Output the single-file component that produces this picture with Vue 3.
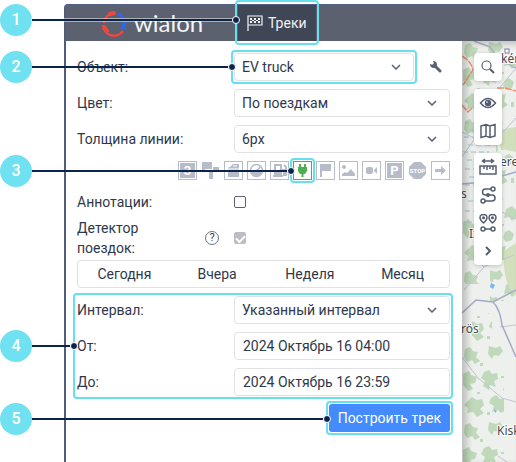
<script setup>
import { ref } from 'vue'

const unit = ref('EV truck')
const color = ref('По поездкам')
const thickness = ref('6px')
const interval = ref('Указанный интервал')
const from = ref('2024 Октябрь 16 04:00')
const to = ref('2024 Октябрь 16 23:59')
const annotations = ref(false)
const detector = ref(true)
const periods = ['Сегодня', 'Вчера', 'Неделя', 'Месяц']
const markers = [
  { id: 'clusters', label: 'Группировка' },
  { id: 'events', label: 'События' },
  { id: 'fillings', label: 'Заправки' },
  { id: 'speedings', label: 'Превышения скорости' },
  { id: 'thefts', label: 'Сливы' },
  { id: 'charges', label: 'Зарядки' },
  { id: 'flags', label: 'Маркеры событий' },
  { id: 'images', label: 'Изображения' },
  { id: 'video', label: 'Видео' },
  { id: 'parkings', label: 'Стоянки' },
  { id: 'stops', label: 'Остановки' },
  { id: 'arrows', label: 'Направление' }
]
</script>

<template>
  <div class="page">
    <div class="app">
      <header class="topbar">
        <a class="brand" href="#">
          <svg width="28" height="28" viewBox="0 0 28 28" fill="none">
            <path d="M4 14A11 11 0 0 1 14 4" stroke="#f4453c" stroke-width="2.4" />
            <path d="M10 5l4-1" stroke="#f4453c" stroke-width="4" stroke-linecap="round" />
            <path d="M3 16a11 11 0 0 0 20 6" stroke="#f4453c" stroke-width="2.4" />
            <path d="M4 18l3 4" stroke="#f4453c" stroke-width="4" stroke-linecap="round" />
            <path d="M17 4a11 11 0 0 1 7 9" stroke="#2f65f4" stroke-width="2.4" />
            <path d="M24 15l-1 4" stroke="#2f65f4" stroke-width="4" stroke-linecap="round" />
          </svg>
          <span>wialon</span>
        </a>
        <a class="tab" href="#">
          <svg width="18" height="18" viewBox="0 0 18 18">
            <path d="M2 17V2h14v9H2" fill="none" stroke="#f4f5f8" stroke-width="1.2" />
            <path d="M4 4h2v2H4zM8 4h2v2H8zM12 4h2v2h-2zM6 6h2v1H6zM10 6h2v1h-2zM4 7h2v2H4zM8 7h2v2H8zM12 7h2v2h-2z" fill="#f4f5f8" />
          </svg>
          <span>Треки</span>
          <i class="ring ring-tab"></i>
        </a>
      </header>

      <div class="content">
        <form class="panel" @submit.prevent>
          <div class="row">
            <label for="unit">Объект:</label>
            <div class="with-tool">
              <div class="select">
                <select id="unit" v-model="unit"><option>EV truck</option></select>
                <svg class="chevron" viewBox="0 0 10 6"><path d="M1 1l4 4 4-4" /></svg>
                <i class="ring"></i>
              </div>
              <button class="tool" type="button" aria-label="Свойства объекта">
                <svg width="12" height="12" viewBox="0 0 12 12">
                  <path d="M4 4l6 6" stroke="#5a6172" stroke-width="3" stroke-linecap="round" />
                  <path d="M3 0l1 3-1 1-3-1q0 4 4 4 3 0 3-3Q7 0 3 0z" fill="#5a6172" />
                </svg>
              </button>
            </div>
          </div>

          <div class="row">
            <label for="color">Цвет:</label>
            <div class="select">
              <select id="color" v-model="color"><option>По поездкам</option></select>
              <svg class="chevron" viewBox="0 0 10 6"><path d="M1 1l4 4 4-4" /></svg>
            </div>
          </div>

          <div class="row">
            <label for="thickness">Толщина линии:</label>
            <div class="select">
              <select id="thickness" v-model="thickness"><option>6px</option></select>
              <svg class="chevron" viewBox="0 0 10 6"><path d="M1 1l4 4 4-4" /></svg>
            </div>
          </div>

          <div class="markers">
            <button v-for="m in markers" :key="m.id" type="button" class="marker" :class="{ on: m.id === 'charges' }" :aria-label="m.label">
              <svg width="19" height="19" viewBox="0 0 19 19">
                <rect v-if="m.id !== 'events' && m.id !== 'stops'" x=".5" y=".5" width="18" height="18" fill="#fff" stroke="currentColor" />
                <g v-if="m.id === 'clusters'">
                  <path d="M2 2h15v15H2z" fill="currentColor" />
                  <text x="9.5" y="14" class="glyph">3</text>
                </g>
                <path v-else-if="m.id === 'events'" d="M1 1h10v7H4v1H1zM12 6h6v5h-6v7H8v-8h4z" fill="currentColor" />
                <g v-else-if="m.id === 'fillings'">
                  <path d="M4 7l2-1 3-3h6v13H4z" fill="currentColor" />
                  <path d="M9 5h4M4 8h11" stroke="#fff" />
                </g>
                <g v-else-if="m.id === 'speedings'">
                  <circle cx="9.5" cy="9.5" r="6" fill="none" stroke="currentColor" stroke-width="1.5" />
                  <path d="M4 11h11q-2 5-5.5 5T4 11zM8 10l5-5 1 1-4 5z" fill="currentColor" />
                </g>
                <g v-else-if="m.id === 'thefts'">
                  <path d="M3 15h10M5 15V4h6v11M12 9h2v5h2V6l-2-2" fill="none" stroke="currentColor" stroke-width="2" />
                  <path d="M5 9h6v6H5z" fill="currentColor" />
                </g>
                <path v-else-if="m.id === 'charges'" d="M6 3h2v3h3V3h2v3h1v4l-2 3h-1.500v3h-2v-3H7l-2-3V6h1z" fill="currentColor" />
                <path v-else-if="m.id === 'flags'" d="M4 3h11v7H6v6H4z" fill="currentColor" />
                <g v-else-if="m.id === 'images'" fill="currentColor">
                  <circle cx="5" cy="6" r="2" />
                  <path d="M3 15v-2l3-2 2 1 4-4 4 5v2z" />
                </g>
                <g v-else-if="m.id === 'video'" fill="currentColor">
                  <rect x="4" y="6" width="7" height="7" rx="2" />
                  <path d="M12 9l3-3v7l-3-3z" />
                </g>
                <g v-else-if="m.id === 'parkings'">
                  <path d="M2 2h15v15H2z" fill="currentColor" />
                  <text x="9.5" y="14" class="glyph">P</text>
                </g>
                <g v-else-if="m.id === 'stops'">
                  <path d="M6 1h7l5 5v7l-5 5H6l-5-5V6z" fill="currentColor" />
                  <text x="9.5" y="12" class="stop">STOP</text>
                </g>
                <path v-else d="M4 8h6V5l5 4.500-5 4.500v-3H4z" fill="currentColor" />
              </svg>
              <i v-if="m.id === 'charges'" class="ring"></i>
            </button>
          </div>

          <div class="row notes">
            <label for="annotations">Аннотации:</label>
            <input id="annotations" v-model="annotations" class="check" type="checkbox">
          </div>

          <div class="row detector">
            <div class="detector-label">
              <label for="detector">Детектор поездок:</label>
              <button class="help" type="button" aria-label="Справка">?</button>
            </div>
            <input id="detector" v-model="detector" class="check" type="checkbox" disabled>
          </div>

          <div class="periods">
            <button v-for="p in periods" :key="p" type="button">{{ p }}</button>
          </div>

          <div class="range">
            <div class="row">
              <label for="interval">Интервал:</label>
              <div class="select">
                <select id="interval" v-model="interval"><option>Указанный интервал</option></select>
                <svg class="chevron" viewBox="0 0 10 6"><path d="M1 1l4 4 4-4" /></svg>
              </div>
            </div>
            <div class="row">
              <label for="from">От:</label>
              <input id="from" v-model="from" class="field" type="text">
            </div>
            <div class="row">
              <label for="to">До:</label>
              <input id="to" v-model="to" class="field" type="text">
            </div>
            <i class="ring ring-range"></i>
          </div>

          <button class="submit" type="submit">Построить трек<i class="ring"></i></button>
        </form>

        <div class="map">
          <svg class="tiles" viewBox="0 0 54 421" preserveAspectRatio="xMinYMin slice">
            <defs>
              <pattern id="woods" width="54" height="76" patternUnits="userSpaceOnUse">
                <path d="M3 4l5-2 3 4 5 1-2 5 4 4-5 3-3-4-5 2-3-5zM27 1l7 2 4-2 3 5-4 5-5-1-2 4-4-5zM44 16l6-3 4 4v8l-4 3-3-4-5 1zM1 29l6-3 2 4 6 2-2 6-5 1 3 5-5 2-5-6zM22 27l5-2 3 4 5-1 1 6-4 2 2 6-6-2-1 5-6-4 2-5-4-3zM43 39l4-2 5 4-2 6-6 2-3-4zM6 56l4-4 5 3 5-1 2 6-4 4 4 4-7 4-4-5-6 1 1-5-4-3zM29 53l5-3 4 4 6-1-2 7 4 4-7 4-3-3-6 2 2-6-5-3z" />
                <path d="M18 18h3v3h-3zM39 31h3v2h-3zM25 67h3v3h-3zM49 61h3v5h-3zM15 47h3v2h-3z" />
              </pattern>
            </defs>
            <path fill="#edf0ec" d="M0 0h54v421H0z" />
            <path class="woods" fill="url(#woods)" d="M0 0h54v94H0zM34 94h20v135H34zM0 178h18v65H0zM28 229h26v31H28zM0 305h42v116H0zM10 272h20v33H10z" />
            <path fill="#d1dfbd" d="M30 90l24-4v25l-14-3zM42 210l12-8v52q-14-10-12-44z" />
            <g stroke="#9fc4da" stroke-width="1" stroke-dasharray="5 3">
              <path d="M3 82h24M8 89h26M2 96h25M6 104h28M1 111h26M5 119h25M3 128h27M7 136h23M3 144h26M6 160h23M3 170h20M5 181h22" />
            </g>
            <g fill="none" stroke="#c3c4d2" stroke-width="1">
              <path d="M0 91l28 14 26-28M54 27L35 50 18 90 0 116M2 249l20-23L5 209M18 223l-3-14M21 226l31-12M54 178l-14-7-12 20-11 17M0 316l16 21 24 20 14 4M38 286l16-2M54 427l-18-12" />
            </g>
            <path d="M12 0l16 6 10 13 16 8" fill="none" stroke="#b1b3cc" stroke-width="1.5" />
            <path d="M0 143q18-1 29-5l25-7M0 272l14-13 17 2 23-12M31 261q7 7 9 23l14 32" fill="none" stroke="#a6aac5" stroke-width="1.5" />
            <path d="M0 15q10 6 11 14L1 44M0 64l6 7 5-5M35 47h8l11 3" fill="none" stroke="#ec9273" stroke-width="1.5" stroke-dasharray="7 1" />
            <path d="M14 210l3 2-1 4-3-2zM29 242l4 2-2 4-3-2zM32 368l3 2-2 2z" fill="#79b5ef" />
            <rect x="43" y="8" width="4" height="4" fill="#fff" stroke="#777da0" />
            <g class="names">
              <text x="39" y="22">kér</text>
              <text x="38" y="125">erel</text>
              <text x="-1" y="157">s</text>
              <text x="7" y="197">Iz</text>
              <text x="-1" y="292">rös</text>
              <text x="35" y="394">Kisk</text>
            </g>
          </svg>
          <nav class="tools">
            <div class="group">
              <button type="button" aria-label="Поиск">
                <svg viewBox="0 0 18 18"><circle cx="7.500" cy="7.500" r="4.500" stroke-width="1.200" /><path d="M11 11l4 4" stroke-width="2" /></svg>
              </button>
            </div>
            <div class="group">
              <button type="button" aria-label="Видимость">
                <svg viewBox="0 0 18 18"><path d="M1.500 9q7.500-9 15 0-7.500 9-15 0z" /><circle cx="9" cy="9" r="2.500" fill="#555e70" /><circle cx="8" cy="8" r=".8" fill="#fff" stroke="none" /></svg>
              </button>
              <button type="button" aria-label="Слои карты">
                <svg viewBox="0 0 18 18"><path d="M2 4l5-1.500 4 1.500 5-1.500V14l-5 1.500L7 14l-5 1.500zM7 3v11M11 4v11" /></svg>
              </button>
            </div>
            <div class="group">
              <button type="button" aria-label="Линейка">
                <svg viewBox="0 0 18 18"><path d="M4 3h10M6 1L3.500 3 6 5M12 1l2.500 2L12 5M1 8h16v8H1zM5 8v3M8 8v4M11 8v3M14 8v4" /></svg>
              </button>
              <button type="button" aria-label="Маршрут">
                <svg viewBox="0 0 18 18"><path d="M12 3H6.500q-3 0-3 3t3 3H13q3 0 3 3t-3 3H6" /><circle cx="14" cy="3" r="2" fill="#fff" /><circle cx="4" cy="15" r="2" fill="#fff" /><circle cx="9" cy="9" r="1.200" fill="#555e70" /></svg>
              </button>
              <button type="button" aria-label="Точки маршрута">
                <svg viewBox="0 0 18 18"><path d="M4.500 9Q1 6 1 3.500A3.500 3 0 0 1 8 3.500Q8 6 4.500 9zM13.500 9Q10 6 10 3.500A3.500 3 0 0 1 17 3.500Q17 6 13.500 9zM6 15h6" /><circle cx="4.500" cy="3.800" r=".8" /><circle cx="13.500" cy="3.800" r=".8" /><circle cx="4" cy="15" r="2" /><circle cx="14" cy="15" r="2" /></svg>
              </button>
              <button type="button" aria-label="Ещё">
                <svg viewBox="0 0 18 18"><path d="M7 5l4 4-4 4" stroke-width="2" /></svg>
              </button>
            </div>
          </nav>
        </div>
      </div>
    </div>

    <div class="callout c1"><b>1</b><i></i></div>
    <div class="callout c2"><b>2</b><i></i></div>
    <div class="callout c3"><b>3</b><i></i></div>
    <div class="callout c4"><b>4</b><i></i></div>
    <div class="callout c5"><b>5</b><i></i></div>
  </div>
</template>

<style>
body {
  background: #fff;
}
</style>

<style scoped>
* {
  box-sizing: border-box;
}
.page {
  position: relative;
  display: flex;
  min-height: 100vh;
  padding: 4px 0 0 64px;
  overflow: hidden;
  font: 14px/20px Roboto, "Noto Sans", sans-serif;
  color: #2f384b;
}
.app {
  flex: 1;
  display: flex;
  flex-direction: column;
  min-width: 0;
  border-left: 2px solid #525d7b;
  border-top-left-radius: 4px;
}
button,
input,
select {
  margin: 0;
  padding: 0;
  border: 0;
  background: none;
  font: inherit;
  color: inherit;
}
svg {
  display: block;
}
.topbar {
  display: flex;
  height: 37px;
  border-top: 1px solid #526188;
  background: #5c616f;
}
.brand {
  display: flex;
  align-items: center;
  gap: 6px;
  width: 172px;
  padding-left: 34px;
  color: #f4f5f8;
  font: 24px/28px Lato, sans-serif;
  text-decoration: none;
}
.tab {
  position: relative;
  display: flex;
  align-items: center;
  gap: 4px;
  padding: 0 9px 0 8px;
  background: #3f4656;
  color: #eff0f3;
  text-decoration: none;
}
.ring {
  position: absolute;
  inset: -3px;
  border: 2px solid #68dfef;
  border-radius: 4px;
  pointer-events: none;
}
.ring-tab {
  inset: -5px -3px -4px;
}
.content {
  flex: 1;
  display: flex;
}
.panel {
  display: flex;
  flex-direction: column;
  gap: 8px;
  width: 396px;
  padding: 12px 12px 30px 11px;
  background: #fff;
}
.row {
  display: grid;
  grid-template-columns: 157px 1fr;
  align-items: center;
}
.with-tool {
  display: grid;
  grid-template-columns: 1fr 36px;
}
.select {
  position: relative;
}
.select select,
.field {
  display: block;
  width: 100%;
  height: 28px;
  padding: 0 8px;
  border: 1px solid #e0e1e4;
  border-radius: 4px;
  background: #fff;
  appearance: none;
}
.select select {
  padding: 0 7px;
}
.chevron {
  position: absolute;
  top: 11px;
  right: 13px;
  width: 10px;
  height: 6px;
  fill: none;
  stroke: #5a6172;
  stroke-width: 1.5;
  pointer-events: none;
}
.tool {
  display: grid;
  place-items: center;
  padding-left: 8px;
}
.markers {
  display: flex;
  justify-content: flex-end;
  gap: 4px;
}
.marker {
  position: relative;
  color: #b7bcc9;
}
.marker.on {
  color: #4caf50;
}
.glyph {
  font: bold 13px Roboto, sans-serif;
  fill: #fff;
  text-anchor: middle;
}
.stop {
  font: bold 6px Roboto, sans-serif;
  fill: #fff;
  text-anchor: middle;
}
.notes {
  padding-top: 4px;
}
.detector {
  margin-top: -2px;
}
.detector-label {
  display: flex;
  align-items: center;
  justify-content: space-between;
  padding-right: 15px;
}
.detector-label label {
  width: 90px;
}
.help {
  width: 14px;
  height: 14px;
  border: 1px solid #6b7280;
  border-radius: 50%;
  font-size: 11px;
  line-height: 12px;
}
.check {
  width: 12px;
  height: 12px;
  border: 1px solid #596174;
  border-radius: 2px;
  appearance: none;
}
.check:checked {
  border-color: #bcbec3;
  background: #bcbec3;
  display: grid;
  place-items: center;
}
.check:checked::after {
  content: "";
  width: 7px;
  height: 4px;
  border: solid #fff;
  border-width: 0 0 2px 2px;
  transform: rotate(-45deg);
}
.periods {
  display: grid;
  grid-template-columns: repeat(4, 1fr);
  height: 28px;
  margin-top: -6px;
  border: 1px solid #e0e1e4;
  border-radius: 4px;
}
.range {
  position: relative;
  display: grid;
  gap: 8px;
}
.ring-range {
  inset: -3px -3px -3px -4px;
}
.submit {
  position: relative;
  align-self: flex-end;
  height: 28px;
  padding: 0 9px;
  border-radius: 3px;
  background: #438bff;
  color: #fff;
}
.map {
  position: relative;
  flex: 1;
  min-width: 0;
  overflow: hidden;
  background: #edf0ec;
}
.map::before {
  content: "";
  position: absolute;
  inset: 0;
  z-index: 1;
  box-shadow: inset 5px 3px 6px #0003;
  pointer-events: none;
}
.tiles {
  position: absolute;
  inset: 0;
  width: 100%;
  height: 100%;
}
.woods {
  opacity: 0.65;
}
#woods path {
  fill: #a7cd9f;
}
.names {
  font: 12px "Noto Sans", sans-serif;
  fill: #444a4f;
  stroke: #fff;
  stroke-width: 2px;
  paint-order: stroke;
}
.tools {
  position: relative;
  z-index: 2;
  display: grid;
  gap: 8px;
  width: 28px;
  margin: 12px 0 0 12px;
}
.group {
  display: grid;
  grid-auto-rows: 28px;
  border-radius: 4px;
  background: #fff;
  box-shadow: 0 1px 4px #0003;
}
.group button {
  display: grid;
  place-items: center;
}
.group svg {
  width: 18px;
  height: 18px;
  fill: none;
  stroke: #555e70;
  stroke-width: 1.5;
}
.callout {
  position: absolute;
  left: 0;
  display: flex;
  align-items: center;
  pointer-events: none;
}
.callout b {
  width: 32px;
  height: 32px;
  border-radius: 50%;
  background: #70e1f0;
  color: #fff;
  font: 500 16px/32px Roboto, sans-serif;
  text-align: center;
}
.callout::after {
  content: "";
  flex: 1;
  order: 1;
  height: 2px;
  background: #0b244a;
}
.callout i {
  order: 2;
  width: 8px;
  height: 8px;
  border: 1px solid #fff;
  border-radius: 50%;
  background: #0b244a;
}
.c1 {
  top: 4px;
  width: 240px;
}
.c1::after {
  box-shadow: 0 0 0 1px #ffffff80;
}
.c2 {
  top: 51px;
  width: 236px;
}
.c3 {
  top: 155px;
  width: 295px;
}
.c4 {
  top: 330px;
  width: 78px;
}
.c5 {
  top: 403px;
  width: 331px;
}
</style>
